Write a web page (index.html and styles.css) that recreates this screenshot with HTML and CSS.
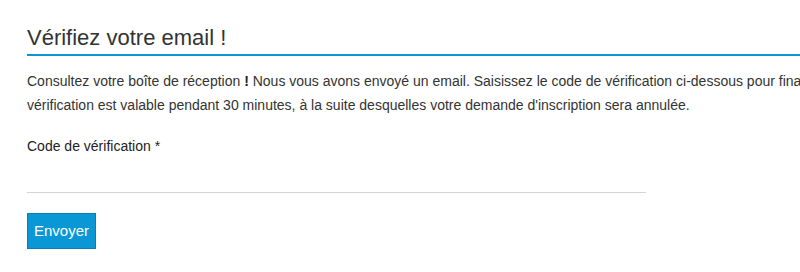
FILE: index.html
```
<!DOCTYPE html>
<html lang="fr">
<head>
<meta charset="utf-8">
<title>Vérifiez votre email</title>
<link rel="stylesheet" href="styles.css">
</head>
<body>
<main class="page">
  <h1 class="title">Vérifiez votre email !</h1>
  <p class="intro">Consultez votre boîte de réception <strong>!</strong> Nous vous avons envoyé un email. Saisissez le code de vérification ci-dessous pour finaliser votre inscription. Le code de vérification est valable pendant 30 minutes, à la suite desquelles votre demande d'inscription sera annulée.</p>
  <form class="form">
    <label class="label" for="code">Code de vérification *</label>
    <input class="input" id="code" type="text">
    <button class="btn" type="button">Envoyer</button>
  </form>
</main>
</body>
</html>
```
FILE: styles.css
```
html, body {
  margin: 0;
  padding: 0;
  overflow: hidden;
  background: #fff;
}
body {
  font-family: "Liberation Sans", Arial, sans-serif;
  color: #333;
}
.page {
  padding: 0 0 0 27px;
  width: 1040px;
}
.title {
  margin: 25px 0 0;
  font-size: 22px;
  font-weight: normal;
  line-height: 26px;
  padding-bottom: 3px;
  border-bottom: 2px solid #0a96d4;
  color: #333;
}
.intro {
  margin: 13px 0 0;
  font-size: 14px;
  line-height: 24px;
  color: #333;
}
.intro strong {
  font-weight: bold;
  color: #222;
}
.form {
  display: flex;
  flex-direction: column;
  align-items: flex-start;
  margin-top: 19px;
}
.label {
  font-size: 14px;
  line-height: 20px;
  color: #222;
}
.input {
  box-sizing: border-box;
  width: 619px;
  height: 37px;
  margin: 0;
  padding: 0;
  border: 0;
  border-bottom: 1px solid #d3d3d3;
  outline: none;
  font: 14px "Liberation Sans", Arial, sans-serif;
}
.btn {
  box-sizing: border-box;
  margin-top: 20px;
  height: 36px;
  padding: 0 6px;
  background: #0998d5;
  border: 1px solid #0b7db2;
  color: #fff;
  font: 15px "Liberation Sans", Arial, sans-serif;
  line-height: 34px;
  cursor: pointer;
}
```
